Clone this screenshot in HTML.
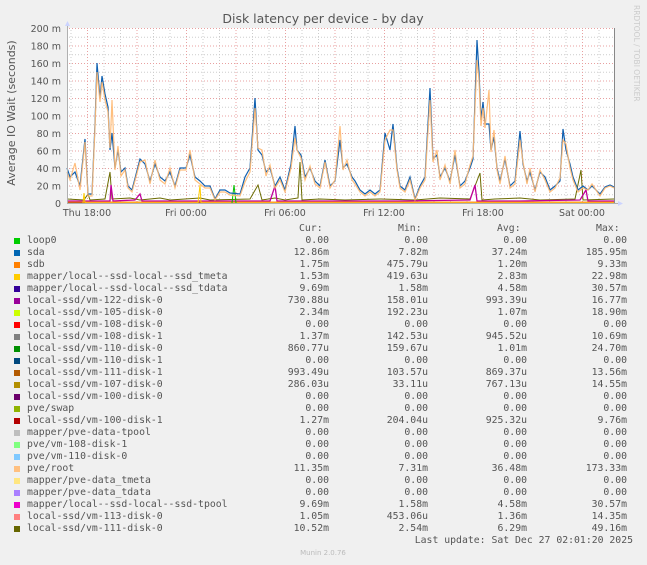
<!DOCTYPE html>
<html><head><meta charset="utf-8"><style>
html,body{margin:0;padding:0;background:#f0f0f0;}
body{width:647px;height:563px;position:relative;overflow:hidden;font-family:"DejaVu Sans","Liberation Sans",sans-serif;}
.leg{position:absolute;left:0;top:2px;width:647px;height:563px;font-family:"DejaVu Sans Mono","Liberation Mono",monospace;font-size:9.8px;color:#555;}
.r{position:absolute;height:12px;line-height:12px;white-space:pre;}
.sw{position:absolute;width:6px;height:6px;left:14px;}
</style></head><body>
<svg width="647" height="563" style="position:absolute;left:0;top:0" font-family="DejaVu Sans, Liberation Sans, sans-serif">
<defs>
<pattern id="vg" patternUnits="userSpaceOnUse" x="70.5" y="0" width="16.5" height="563"><line x1="0.5" y1="0" x2="0.5" y2="563" stroke="#ccc" stroke-width="1" stroke-dasharray="1,2"/></pattern>
<pattern id="vr" patternUnits="userSpaceOnUse" x="87" y="0" width="49.5" height="563"><line x1="0.5" y1="0" x2="0.5" y2="563" stroke="#e8a0a0" stroke-width="1" stroke-dasharray="1,2"/></pattern>
<pattern id="hg" patternUnits="userSpaceOnUse" x="0" y="28" width="647" height="8.75"><line x1="0" y1="0.5" x2="647" y2="0.5" stroke="#ccc" stroke-width="1" stroke-dasharray="1,2"/></pattern>
<pattern id="hr" patternUnits="userSpaceOnUse" x="0" y="28" width="647" height="17.5"><line x1="0" y1="0.5" x2="647" y2="0.5" stroke="#e8a0a0" stroke-width="1" stroke-dasharray="1,2"/></pattern>
</defs>
<rect x="67" y="28" width="547" height="175" fill="#fff"/>
<rect x="67" y="28" width="547" height="175" fill="url(#vg)"/>
<rect x="67" y="28" width="547" height="175" fill="url(#hg)"/>
<rect x="67" y="28" width="547" height="175" fill="url(#vr)"/>
<rect x="67" y="28" width="547" height="175" fill="url(#hr)"/>
<text x="323" y="23" text-anchor="middle" font-size="12.5" fill="#555">Disk latency per device - by day</text>
<g font-size="9.5" fill="#555" text-anchor="end">
<text x="61" y="32">200 m</text><text x="61" y="49.5">180 m</text><text x="61" y="67">160 m</text><text x="61" y="84.5">140 m</text><text x="61" y="102">120 m</text><text x="61" y="119.5">100 m</text><text x="61" y="137">80 m</text><text x="61" y="154.5">60 m</text><text x="61" y="172">40 m</text><text x="61" y="189.5">20 m</text><text x="61" y="207">0</text>
</g>
<text transform="translate(15,113) rotate(-90)" text-anchor="middle" font-size="11" fill="#555">Average IO Wait (seconds)</text>
<text transform="translate(634,5) rotate(90)" font-size="7.5" fill="#ccc">RRDTOOL / TOBI OETIKER</text>
<g font-size="9.5" fill="#555" text-anchor="middle">
<text x="87" y="216">Thu 18:00</text><text x="186" y="216">Fri 00:00</text><text x="285" y="216">Fri 06:00</text><text x="384" y="216">Fri 12:00</text><text x="483" y="216">Fri 18:00</text><text x="582" y="216">Sat 00:00</text>
</g>
<polyline fill="none" stroke="#6b6b00" stroke-width="1" points="67,199 84,200 88,194 90,200 105,199 110,172 112,199 130,198 140,200 150,199 160,198 170,200 185,199 200,198 210,200 250,199 258,185 262,200 275,198 285,200 298,198 300,162 302,200 320,199 345,200 380,199 415,200 440,198 470,199 480,173 482,200 495,199 520,198 540,200 575,199 581,170 583,200 614,199"/>
<polyline fill="none" stroke="#c0009a" stroke-width="1.3" points="67,201 110,201 111,185 113,201 135,200 140,194 142,201 200,201 270,201 275,186 277,201 330,201 400,201 470,200 475,185 477,201 520,201 580,200 586,190 588,201 614,201"/>
<polyline fill="none" stroke="#ff8a30" stroke-width="1" points="67,202 614,202"/>
<polyline fill="none" stroke="#a03000" stroke-width="1" points="67,203 614,203"/>
<polyline fill="none" stroke="#ffcc00" stroke-width="1" points="83,203 84,193 85,203 198,203 200,185 201,203 614,203"/>
<polyline fill="none" stroke="#00c000" stroke-width="1" points="232,203 234,185 236,203"/>
<polyline fill="none" stroke="#1060b0" stroke-width="1.2" points="67,168 70,177 75,172 80,186 85,139 88,194 92,194 95,124 97,63 100,98 102,76 105,94 108,107 110,150 112,133 115,168 118,150 121,172 125,168 128,186 132,190 140,159 145,164 150,181 155,164 160,177 165,181 170,172 175,186 180,168 186,168 190,155 195,177 200,181 205,186 210,186 215,199 220,190 225,190 230,193 240,194 245,177 250,168 255,98 258,150 262,155 266,172 270,168 275,186 280,177 285,190 291,164 295,126 297,150 301,155 305,177 310,168 315,181 320,186 325,160 330,186 335,181 340,140 343,168 347,164 352,177 355,181 360,190 365,194 370,190 375,194 380,190 385,133 390,150 393,124 397,168 400,186 405,190 410,177 415,199 420,186 425,177 430,88 433,159 437,155 440,177 445,168 450,181 455,155 460,186 465,181 470,168 473,159 477,40 479,72 481,120 483,102 485,124 489,124 491,150 494,137 497,168 500,181 505,159 510,186 515,181 520,131 523,164 527,181 530,172 535,190 540,172 545,177 550,190 555,186 560,181 563,129 566,150 570,164 573,177 578,190 583,186 588,190 592,186 600,194 605,187 610,185 614,187"/>
<polyline fill="none" stroke="#ffb870" stroke-width="1.2" opacity="0.9" points="67,172 70,180 75,163 80,190 85,142 88,196 92,196 95,128 97,72 100,102 102,82 105,100 108,112 110,148 112,100 115,170 118,146 121,176 125,170 128,188 132,192 140,162 145,160 150,184 155,160 160,180 165,184 170,168 175,188 180,170 186,170 190,150 195,180 200,184 205,188 210,188 215,200 220,192 225,192 230,195 240,196 245,182 250,172 255,108 258,148 262,150 266,176 270,165 275,188 280,180 285,192 291,168 295,138 297,150 301,158 305,180 310,166 315,184 320,188 325,162 330,188 335,180 340,126 343,170 347,160 352,180 355,184 360,192 365,196 370,192 375,196 380,192 385,140 390,130 393,130 397,170 400,188 405,192 410,180 415,200 420,188 425,180 430,100 433,162 437,150 440,180 445,165 450,184 455,150 460,188 465,184 470,165 473,156 477,60 479,80 481,126 483,108 485,128 489,90 491,152 494,130 497,170 500,184 505,156 510,188 515,184 520,140 523,162 527,184 530,168 535,192 540,170 545,180 550,192 555,188 560,178 563,140 566,144 570,168 573,180 578,192 583,188 588,190 592,184 600,196 605,188 610,186 614,188"/>
<line x1="67" y1="203.5" x2="618" y2="203.5" stroke="#b0b0b0" stroke-width="1"/>
<line x1="67.5" y1="24" x2="67.5" y2="203" stroke="#b0b0b0" stroke-width="1"/>
<line x1="614.5" y1="28" x2="614.5" y2="203" stroke="#888" stroke-width="1"/>
<polygon points="618,201 623,203.5 618,206" fill="#ccd4ff"/>
<polygon points="65,26 67.5,21 70,26" fill="#ccd4ff"/>
<text x="323" y="555" text-anchor="middle" font-size="7" fill="#bbb">Munin 2.0.76</text>
</svg>
<div class="leg">
<div class="r" style="top:221px;left:299px">Cur:</div>
<div class="r" style="top:221px;left:398px">Min:</div>
<div class="r" style="top:221px;left:497px">Avg:</div>
<div class="r" style="top:221px;left:596px">Max:</div>
<div class="r" style="top:533px;right:14px">Last update: Sat Dec 27 02:01:20 2025</div>
<div class="r" style="top:233px;left:27px">loop0</div><div class="sw" style="top:236px;background:#00cc00"></div><div class="r" style="top:233px;right:318px">0.00</div><div class="r" style="top:233px;right:219px">0.00</div><div class="r" style="top:233px;right:120px">0.00</div><div class="r" style="top:233px;right:20px">0.00</div>
<div class="r" style="top:245px;left:27px">sda</div><div class="sw" style="top:248px;background:#0066b3"></div><div class="r" style="top:245px;right:318px">12.86m</div><div class="r" style="top:245px;right:219px">7.82m</div><div class="r" style="top:245px;right:120px">37.24m</div><div class="r" style="top:245px;right:20px">185.95m</div>
<div class="r" style="top:257px;left:27px">sdb</div><div class="sw" style="top:260px;background:#ff8000"></div><div class="r" style="top:257px;right:318px">1.75m</div><div class="r" style="top:257px;right:219px">475.79u</div><div class="r" style="top:257px;right:120px">1.20m</div><div class="r" style="top:257px;right:20px">9.33m</div>
<div class="r" style="top:269px;left:27px">mapper/local--ssd-local--ssd_tmeta</div><div class="sw" style="top:272px;background:#ffcc00"></div><div class="r" style="top:269px;right:318px">1.53m</div><div class="r" style="top:269px;right:219px">419.63u</div><div class="r" style="top:269px;right:120px">2.83m</div><div class="r" style="top:269px;right:20px">22.98m</div>
<div class="r" style="top:281px;left:27px">mapper/local--ssd-local--ssd_tdata</div><div class="sw" style="top:284px;background:#330099"></div><div class="r" style="top:281px;right:318px">9.69m</div><div class="r" style="top:281px;right:219px">1.58m</div><div class="r" style="top:281px;right:120px">4.58m</div><div class="r" style="top:281px;right:20px">30.57m</div>
<div class="r" style="top:293px;left:27px">local-ssd/vm-122-disk-0</div><div class="sw" style="top:296px;background:#990099"></div><div class="r" style="top:293px;right:318px">730.88u</div><div class="r" style="top:293px;right:219px">158.01u</div><div class="r" style="top:293px;right:120px">993.39u</div><div class="r" style="top:293px;right:20px">16.77m</div>
<div class="r" style="top:305px;left:27px">local-ssd/vm-105-disk-0</div><div class="sw" style="top:308px;background:#ccff00"></div><div class="r" style="top:305px;right:318px">2.34m</div><div class="r" style="top:305px;right:219px">192.23u</div><div class="r" style="top:305px;right:120px">1.07m</div><div class="r" style="top:305px;right:20px">18.90m</div>
<div class="r" style="top:317px;left:27px">local-ssd/vm-108-disk-0</div><div class="sw" style="top:320px;background:#ff0000"></div><div class="r" style="top:317px;right:318px">0.00</div><div class="r" style="top:317px;right:219px">0.00</div><div class="r" style="top:317px;right:120px">0.00</div><div class="r" style="top:317px;right:20px">0.00</div>
<div class="r" style="top:329px;left:27px">local-ssd/vm-108-disk-1</div><div class="sw" style="top:332px;background:#808080"></div><div class="r" style="top:329px;right:318px">1.37m</div><div class="r" style="top:329px;right:219px">142.53u</div><div class="r" style="top:329px;right:120px">945.52u</div><div class="r" style="top:329px;right:20px">10.69m</div>
<div class="r" style="top:341px;left:27px">local-ssd/vm-110-disk-0</div><div class="sw" style="top:344px;background:#008f00"></div><div class="r" style="top:341px;right:318px">860.77u</div><div class="r" style="top:341px;right:219px">159.67u</div><div class="r" style="top:341px;right:120px">1.01m</div><div class="r" style="top:341px;right:20px">24.70m</div>
<div class="r" style="top:353px;left:27px">local-ssd/vm-110-disk-1</div><div class="sw" style="top:356px;background:#00487d"></div><div class="r" style="top:353px;right:318px">0.00</div><div class="r" style="top:353px;right:219px">0.00</div><div class="r" style="top:353px;right:120px">0.00</div><div class="r" style="top:353px;right:20px">0.00</div>
<div class="r" style="top:365px;left:27px">local-ssd/vm-111-disk-1</div><div class="sw" style="top:368px;background:#b35a00"></div><div class="r" style="top:365px;right:318px">993.49u</div><div class="r" style="top:365px;right:219px">103.57u</div><div class="r" style="top:365px;right:120px">869.37u</div><div class="r" style="top:365px;right:20px">13.56m</div>
<div class="r" style="top:377px;left:27px">local-ssd/vm-107-disk-0</div><div class="sw" style="top:380px;background:#b38f00"></div><div class="r" style="top:377px;right:318px">286.03u</div><div class="r" style="top:377px;right:219px">33.11u</div><div class="r" style="top:377px;right:120px">767.13u</div><div class="r" style="top:377px;right:20px">14.55m</div>
<div class="r" style="top:389px;left:27px">local-ssd/vm-100-disk-0</div><div class="sw" style="top:392px;background:#6b006b"></div><div class="r" style="top:389px;right:318px">0.00</div><div class="r" style="top:389px;right:219px">0.00</div><div class="r" style="top:389px;right:120px">0.00</div><div class="r" style="top:389px;right:20px">0.00</div>
<div class="r" style="top:401px;left:27px">pve/swap</div><div class="sw" style="top:404px;background:#8fb300"></div><div class="r" style="top:401px;right:318px">0.00</div><div class="r" style="top:401px;right:219px">0.00</div><div class="r" style="top:401px;right:120px">0.00</div><div class="r" style="top:401px;right:20px">0.00</div>
<div class="r" style="top:413px;left:27px">local-ssd/vm-100-disk-1</div><div class="sw" style="top:416px;background:#b30000"></div><div class="r" style="top:413px;right:318px">1.27m</div><div class="r" style="top:413px;right:219px">204.04u</div><div class="r" style="top:413px;right:120px">925.32u</div><div class="r" style="top:413px;right:20px">9.76m</div>
<div class="r" style="top:425px;left:27px">mapper/pve-data-tpool</div><div class="sw" style="top:428px;background:#bebebe"></div><div class="r" style="top:425px;right:318px">0.00</div><div class="r" style="top:425px;right:219px">0.00</div><div class="r" style="top:425px;right:120px">0.00</div><div class="r" style="top:425px;right:20px">0.00</div>
<div class="r" style="top:437px;left:27px">pve/vm-108-disk-1</div><div class="sw" style="top:440px;background:#80ff80"></div><div class="r" style="top:437px;right:318px">0.00</div><div class="r" style="top:437px;right:219px">0.00</div><div class="r" style="top:437px;right:120px">0.00</div><div class="r" style="top:437px;right:20px">0.00</div>
<div class="r" style="top:449px;left:27px">pve/vm-110-disk-0</div><div class="sw" style="top:452px;background:#80c9ff"></div><div class="r" style="top:449px;right:318px">0.00</div><div class="r" style="top:449px;right:219px">0.00</div><div class="r" style="top:449px;right:120px">0.00</div><div class="r" style="top:449px;right:20px">0.00</div>
<div class="r" style="top:461px;left:27px">pve/root</div><div class="sw" style="top:464px;background:#ffc080"></div><div class="r" style="top:461px;right:318px">11.35m</div><div class="r" style="top:461px;right:219px">7.31m</div><div class="r" style="top:461px;right:120px">36.48m</div><div class="r" style="top:461px;right:20px">173.33m</div>
<div class="r" style="top:473px;left:27px">mapper/pve-data_tmeta</div><div class="sw" style="top:476px;background:#ffe680"></div><div class="r" style="top:473px;right:318px">0.00</div><div class="r" style="top:473px;right:219px">0.00</div><div class="r" style="top:473px;right:120px">0.00</div><div class="r" style="top:473px;right:20px">0.00</div>
<div class="r" style="top:485px;left:27px">mapper/pve-data_tdata</div><div class="sw" style="top:488px;background:#aa80ff"></div><div class="r" style="top:485px;right:318px">0.00</div><div class="r" style="top:485px;right:219px">0.00</div><div class="r" style="top:485px;right:120px">0.00</div><div class="r" style="top:485px;right:20px">0.00</div>
<div class="r" style="top:497px;left:27px">mapper/local--ssd-local--ssd-tpool</div><div class="sw" style="top:500px;background:#ee00cc"></div><div class="r" style="top:497px;right:318px">9.69m</div><div class="r" style="top:497px;right:219px">1.58m</div><div class="r" style="top:497px;right:120px">4.58m</div><div class="r" style="top:497px;right:20px">30.57m</div>
<div class="r" style="top:509px;left:27px">local-ssd/vm-113-disk-0</div><div class="sw" style="top:512px;background:#ff8080"></div><div class="r" style="top:509px;right:318px">1.05m</div><div class="r" style="top:509px;right:219px">453.06u</div><div class="r" style="top:509px;right:120px">1.36m</div><div class="r" style="top:509px;right:20px">14.35m</div>
<div class="r" style="top:521px;left:27px">local-ssd/vm-111-disk-0</div><div class="sw" style="top:524px;background:#666600"></div><div class="r" style="top:521px;right:318px">10.52m</div><div class="r" style="top:521px;right:219px">2.54m</div><div class="r" style="top:521px;right:120px">6.29m</div><div class="r" style="top:521px;right:20px">49.16m</div>
</div>
</body></html>
